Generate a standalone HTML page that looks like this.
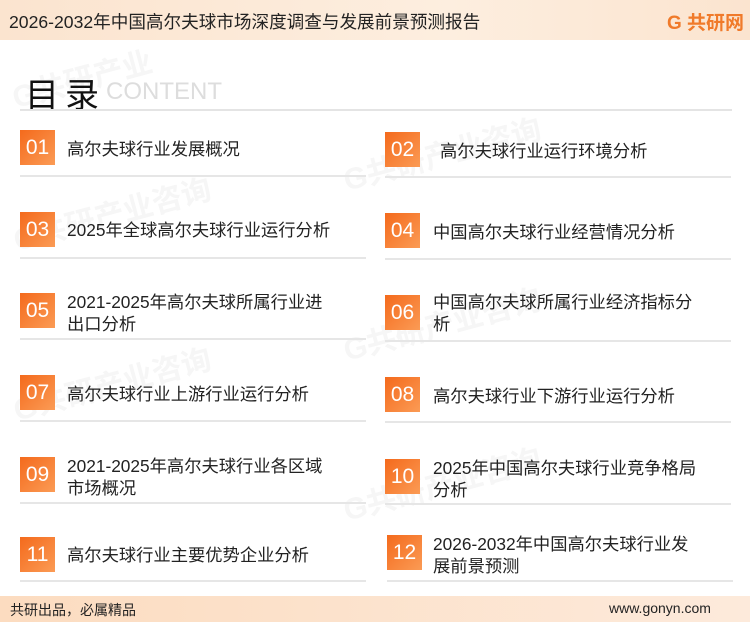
<!DOCTYPE html><html><head><meta charset="utf-8"><style>
body{margin:0;width:750px;height:622px;position:relative;background:#fff;font-family:"Liberation Sans","Noto Sans CJK SC",sans-serif;overflow:hidden}
.hd{position:absolute;left:0;top:0;width:750px;height:40px;background:linear-gradient(90deg,#fbe4cf,#fdeedf 60%,#fbe4cf)}
.hd .t{position:absolute;left:9px;top:9px;font-size:17.6px;color:#222}
.logo{position:absolute;left:667px;top:8px;font-size:19px;font-weight:bold;color:#f07a2a}
.ft{position:absolute;left:0;top:596px;width:750px;height:26px;background:linear-gradient(90deg,#fcdcc0,#fdeadb)}
.ft span{position:absolute;top:4px;font-size:14px;color:#222}
.ttl{position:absolute;left:25px;top:68px;font-size:34px;color:#111;letter-spacing:6px}
.en{position:absolute;left:106px;top:78px;font-size:24px;color:#ddd}
.hl{position:absolute;left:20px;top:109px;width:712px;height:2px;background:#e4e4e4}
.b{position:absolute;width:35px;height:35px;background:linear-gradient(135deg,#f46a1c,#fb9b55);color:#fff;font-size:21px;text-align:center;line-height:35px}
.x{position:absolute;font-size:17.3px;color:#222;line-height:22px}
.l{position:absolute;height:2px;background:#e6e6e6;width:346px}
.wm{position:absolute;font-size:30px;font-weight:bold;color:#f6f6f6;transform:rotate(-15deg)}
</style></head><body>
<div class="hd"><div class="t">2026-2032年中国高尔夫球市场深度调查与发展前景预测报告</div><div class="logo">G 共研网</div></div>
<div class="wm" style="left:10px;top:55px">G共研产业</div>
<div class="wm" style="left:340px;top:130px">G共研产业咨询</div>
<div class="wm" style="left:10px;top:190px">G共研产业咨询</div>
<div class="wm" style="left:340px;top:300px">G共研产业咨询</div>
<div class="wm" style="left:10px;top:360px">G共研产业咨询</div>
<div class="wm" style="left:340px;top:460px">G共研产业咨询</div>
<div class="ttl">目录</div><div class="en">CONTENT</div>
<div class="hl"></div>

<div class="b" style="left:20px;top:130px">01</div><div class="x" style="left:67px;top:138px">高尔夫球行业发展概况</div><div class="l" style="left:20px;top:175px"></div>
<div class="b" style="left:385px;top:132px">02</div><div class="x" style="left:440px;top:140px">高尔夫球行业运行环境分析</div><div class="l" style="left:385px;top:176px"></div>

<div class="b" style="left:20px;top:212px">03</div><div class="x" style="left:67px;top:219px">2025年全球高尔夫球行业运行分析</div><div class="l" style="left:20px;top:257px"></div>
<div class="b" style="left:385px;top:213px">04</div><div class="x" style="left:433px;top:221px">中国高尔夫球行业经营情况分析</div><div class="l" style="left:385px;top:258px"></div>

<div class="b" style="left:20px;top:293px">05</div><div class="x" style="left:67px;top:291px">2021-2025年高尔夫球所属行业进<br>出口分析</div><div class="l" style="left:20px;top:338px"></div>
<div class="b" style="left:385px;top:295px">06</div><div class="x" style="left:433px;top:291px">中国高尔夫球所属行业经济指标分<br>析</div><div class="l" style="left:385px;top:340px"></div>

<div class="b" style="left:20px;top:375px">07</div><div class="x" style="left:67px;top:383px">高尔夫球行业上游行业运行分析</div><div class="l" style="left:20px;top:420px"></div>
<div class="b" style="left:385px;top:377px">08</div><div class="x" style="left:433px;top:385px">高尔夫球行业下游行业运行分析</div><div class="l" style="left:385px;top:421px"></div>

<div class="b" style="left:20px;top:457px">09</div><div class="x" style="left:67px;top:455px">2021-2025年高尔夫球行业各区域<br>市场概况</div><div class="l" style="left:20px;top:502px"></div>
<div class="b" style="left:385px;top:459px">10</div><div class="x" style="left:433px;top:457px">2025年中国高尔夫球行业竞争格局<br>分析</div><div class="l" style="left:385px;top:503px"></div>

<div class="b" style="left:20px;top:537px">11</div><div class="x" style="left:67px;top:544px">高尔夫球行业主要优势企业分析</div><div class="l" style="left:20px;top:580px"></div>
<div class="b" style="left:387px;top:535px">12</div><div class="x" style="left:433px;top:533px">2026-2032年中国高尔夫球行业发<br>展前景预测</div><div class="l" style="left:387px;top:580px"></div>

<div class="ft"><span style="left:10px">共研出品，必属精品</span><span style="left:609px">www.gonyn.com</span></div>
</body></html>
